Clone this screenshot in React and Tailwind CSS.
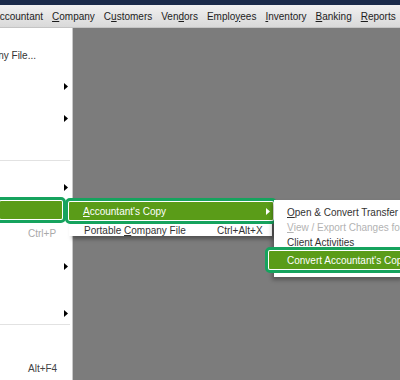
import React from "react";

const Arrow = ({ className = "fill-black" }) => (
  <svg width="4" height="7" viewBox="0 0 4 7" className={className}>
    <path d="M0 0 L4 3.5 L0 7 Z" />
  </svg>
);

const U = ({ children }) => <span className="underline underline-offset-1">{children}</span>;

const menus = [
  ["A", "ccountant"],
  ["", "Company", "C"],
  ["C", "stomers", "u"],
  ["Ven", "ors", "d"],
  ["Emplo", "ees", "y"],
  ["", "nventory", "I"],
  ["", "anking", "B"],
  ["", "eports", "R"],
];

function MenuBar() {
  return (
    <div className="h-[23px] flex items-center gap-[9px] -ml-[7px] bg-gradient-to-b from-[#f1f1f1] to-[#d9d9d9] border-b border-[#c4c4c4] text-[10px] text-[#1d1d1d] whitespace-nowrap">
      {menus.map(([pre, post, key], i) => (
        <span key={i}>
          {key === undefined ? (
            pre + post
          ) : key === "C" && pre === "" ? (
            <>
              <U>C</U>ompany
            </>
          ) : (
            <>
              {pre}
              <U>{key}</U>
              {post}
            </>
          )}
        </span>
      ))}
    </div>
  );
}

function ArrowRow({ h, mt }) {
  return (
    <div className={`flex items-center justify-end pr-[4px] ${h} ${mt}`}>
      <Arrow />
    </div>
  );
}

function FileMenu() {
  return (
    <div className="w-[73px] h-full bg-white border-r border-[#c9c9c9] overflow-hidden flex flex-col text-[10px] text-[#333]">
      <div className="h-[24px] mt-[15px] flex items-center justify-end w-[36px] whitespace-nowrap">
        New Company from Existing Company File...
      </div>
      <ArrowRow h="h-[24px]" mt="mt-[7px]" />
      <ArrowRow h="h-[24px]" mt="mt-[8px]" />
      <div className="h-px mt-[30px] mr-[2px] bg-[#e2e2e2]" />
      <ArrowRow h="h-[19px]" mt="mt-[17px]" />
      <div className="h-[26px] -ml-[4px] w-[70px] border-[3px] border-[#16a35e] rounded-[5px] p-px bg-white">
        <div className="h-full bg-[#5a9c18] rounded-[1px]" />
      </div>
      <div className="h-[20px] flex items-center pl-[28px] text-[#a9a9a9]">Ctrl+P</div>
      <ArrowRow h="h-[24px]" mt="mt-[11px]" />
      <ArrowRow h="h-[20px]" mt="mt-[25px]" />
      <div className="h-px mt-px mr-[2px] bg-[#e2e2e2]" />
      <div className="h-[20px] mt-[33px] flex items-center pl-[28px] text-[#444]">Alt+F4</div>
    </div>
  );
}

function Highlight({ children, className }) {
  return (
    <div className={`h-[26px] border-[3px] border-[#16a35e] rounded-[5px] p-px bg-white ${className}`}>
      <div className="h-full bg-[#5a9c18] rounded-[1px] flex items-center text-white">{children}</div>
    </div>
  );
}

export default function App() {
  return (
    <div className="relative w-[400px] h-[380px] overflow-hidden bg-[#7c7c7c] font-['Liberation_Sans',Arial,sans-serif] flex flex-col">
      <div className="h-[5px] bg-[#1b2b4b]" />
      <MenuBar />
      <div className="flex-1 flex">
        <FileMenu />
      </div>

      <div className="absolute left-[69px] top-[199px] w-[203px] h-[37px] bg-white shadow-[3px_3px_4px_rgba(0,0,0,0.35)] text-[10px] text-[#333]">
        <Highlight className="-ml-[4px] -mt-[1px] w-[212px]">
          <span className="pl-[14px] flex-1">
            <U>A</U>ccountant's Copy
          </span>
          <span className="pr-[3px]">
            <Arrow className="fill-white" />
          </span>
        </Highlight>
        <div className="h-[12px] flex items-center whitespace-nowrap">
          <span className="pl-[15px] w-[148px]">
            Portable <U>C</U>ompany File
          </span>
          <span>Ctrl+Alt+X</span>
        </div>
      </div>

      <div className="absolute left-[274px] top-[200px] w-[130px] h-[77px] bg-white shadow-[-2px_3px_4px_rgba(0,0,0,0.3)] text-[10px] text-[#333] whitespace-nowrap">
        <div className="pt-[5px] pl-[13px]">
          <div className="h-[15px] flex items-center">
            <U>O</U>pen &amp; Convert Transfer File...
          </div>
          <div className="h-[15px] flex items-center text-[#b3b3b3]">
            <U>V</U>iew / Export Changes for Accountant
          </div>
          <div className="h-[15px] flex items-center">Client Activities</div>
        </div>
        <Highlight className="-ml-[9px] -mt-[3px] w-[140px]">
          <span className="pl-[18px]">Convert Accountant's Copy to Company File...</span>
        </Highlight>
      </div>
    </div>
  );
}
